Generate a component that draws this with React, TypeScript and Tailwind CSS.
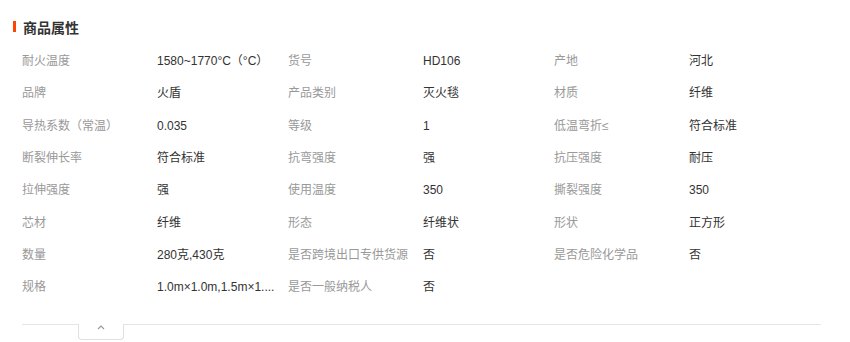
import React from "react";

const rows: [string, string, string, string, string, string][] = [
  ["耐火温度", "1580~1770°C（°C）", "货号", "HD106", "产地", "河北"],
  ["品牌", "火盾", "产品类别", "灭火毯", "材质", "纤维"],
  ["导热系数（常温）", "0.035", "等级", "1", "低温弯折≤", "符合标准"],
  ["断裂伸长率", "符合标准", "抗弯强度", "强", "抗压强度", "耐压"],
  ["拉伸强度", "强", "使用温度", "350", "撕裂强度", "350"],
  ["芯材", "纤维", "形态", "纤维状", "形状", "正方形"],
  ["数量", "280克,430克", "是否跨境出口专供货源", "否", "是否危险化学品", "否"],
  ["规格", "1.0m×1.0m,1.5m×1....", "是否一般纳税人", "否", "", ""],
];

export default function App() {
  return (
    <div
      className="w-[850px] h-[342px] bg-white overflow-hidden"
      style={{ fontFamily: '"Liberation Sans", "Noto Sans CJK SC", sans-serif' }}
    >
      <div className="flex items-center pt-[17px] pl-[13px] h-[36px]">
        <div className="w-[3px] h-[11px] bg-[#ff4400]" />
        <div
          className="ml-[7px] text-[14px] font-bold text-[#333] leading-[18px]"
          style={{ fontFamily: '"Noto Sans CJK SC", sans-serif' }}
        >
          商品属性
        </div>
      </div>
      <div className="pl-[22px] pt-[9px]">
        <div className="w-[799px] grid grid-cols-[135px_131px_135px_131px_135px_132px]">
          {rows.map((r, i) =>
            r.map((c, j) => (
              <div
                key={i + "-" + j}
                className={
                  "h-[32.3px] flex items-center text-[12px] whitespace-nowrap " +
                  (j % 2 === 0 ? "text-[#999]" : "text-[#333]")
                }
              >
                <span>{c}</span>
              </div>
            ))
          )}
        </div>
        <div className="w-[799px] mt-[21px] border-t border-[#e5e5e5]">
          <div className="ml-[56px] -mt-px w-[46px] h-[16px] bg-white border border-t-0 border-[#e0e0e0] rounded-b-[4px] flex items-start justify-center pt-[1px]">
            <svg width="8" height="5" viewBox="0 0 8 5">
              <path d="M1 4 L4 1 L7 4" fill="none" stroke="#999" strokeWidth="1.1" />
            </svg>
          </div>
        </div>
      </div>
    </div>
  );
}
